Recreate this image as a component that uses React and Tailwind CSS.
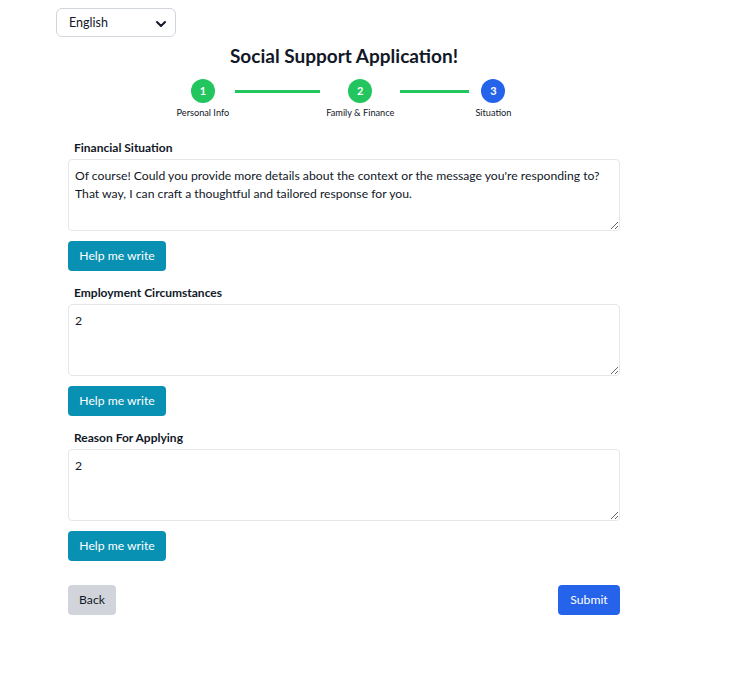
import { ChevronDown } from 'lucide-react';

const steps = [
  { n: 1, label: 'Personal Info', color: 'bg-[#22c55e]' },
  { n: 2, label: 'Family & Finance', color: 'bg-[#22c55e]' },
  { n: 3, label: 'Situation', color: 'bg-[#2563eb]' },
];

const fields = [
  {
    label: 'Financial Situation',
    value:
      "Of course! Could you provide more details about the context or the message you're responding to? That way, I can craft a thoughtful and tailored response for you.",
  },
  { label: 'Employment Circumstances', value: '2' },
  { label: 'Reason For Applying', value: '2' },
];

function Stepper() {
  return (
    <div className="flex items-start justify-center mt-[11px]">
      {steps.map((s, i) => (
        <div key={s.n} className="flex items-start">
          <div className="flex flex-col items-center">
            <div
              className={`w-6 h-6 rounded-full ${s.color} text-white text-[11px] font-bold flex items-center justify-center`}
            >
              {s.n}
            </div>
            <div className="text-[9.2px] text-[#111827] mt-[3px] leading-[14px] whitespace-nowrap">{s.label}</div>
          </div>
          {i < steps.length - 1 && (
            <div className={`h-[3px] bg-[#22c55e] mx-[6px] mt-[11px] ${i === 0 ? 'w-[85px]' : 'w-[69px]'}`}></div>
          )}
        </div>
      ))}
    </div>
  );
}

export default function App() {
  return (
    <div className="min-h-screen bg-white font-['Lato',sans-serif] text-[#111827]">
      <div className="ml-[56px] w-[576px] pt-[8px]">
        <div className="w-[120px] h-[29px] border border-gray-300 rounded-md flex items-center justify-between pl-[12px] pr-[6px] pt-[2px] text-[12.5px]">
          <span>English</span>
          <ChevronDown className="w-4 h-4" strokeWidth={3} />
        </div>

        <h1 className="text-center text-[19px] font-bold leading-[24px] mt-[7px]">Social Support Application!</h1>

        <Stepper />

        <div className="px-3 mt-[20px]">
          {fields.map((f) => (
            <div key={f.label} className="mb-[14px]">
              <label className="block px-1.5 text-[12px] font-bold leading-[16px] mb-[3px]">{f.label}</label>
              <textarea
                readOnly
                value={f.value}
                className="block w-full h-[72px] border border-gray-200 rounded px-[6px] py-[7px] text-[12.2px] leading-[18px] resize-y outline-none"
              />
              <button className="mt-[10px] h-[30px] w-[98px] bg-[#0891b2] text-white text-[12.2px] rounded-sm">
                Help me write
              </button>
            </div>
          ))}

          <div className="flex justify-between mt-[24px]">
            <button className="h-[30px] w-[48px] bg-[#d1d5db] text-[12.2px] rounded-sm">Back</button>
            <button className="h-[30px] w-[62px] bg-[#2563eb] text-white text-[12.2px] rounded-sm">Submit</button>
          </div>
        </div>
      </div>
    </div>
  );
}
